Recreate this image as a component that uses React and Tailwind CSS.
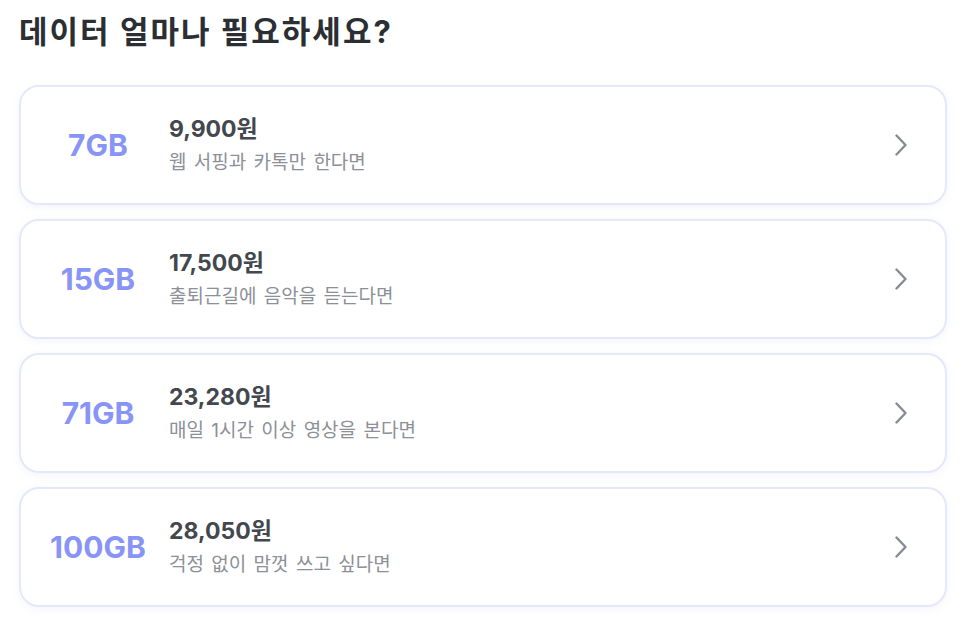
const plans = [
  { size: "7GB", price: "9,900원", desc: "웹 서핑과 카톡만 한다면" },
  { size: "15GB", price: "17,500원", desc: "출퇴근길에 음악을 듣는다면" },
  { size: "71GB", price: "23,280원", desc: "매일 1시간 이상 영상을 본다면" },
  { size: "100GB", price: "28,050원", desc: "걱정 없이 맘껏 쓰고 싶다면" },
];

function App() {
  return (
    <div
      className="min-h-screen bg-white px-[19px] pt-[11px]"
      style={{ fontFamily: 'Inter, "Noto Sans CJK KR", sans-serif' }}
    >
      <h1 className="text-[31px] font-bold leading-[42px] text-[#2b2e33] tracking-[2px]">
        데이터 얼마나 필요하세요?
      </h1>

      <div className="mt-[32px] flex flex-col gap-[14px] w-[928px]">
        {plans.map((plan) => (
          <button
            key={plan.size}
            className="flex items-center h-[120px] bg-white border-2 border-[#e5e8fb] rounded-[20px] shadow-[0_2px_8px_rgba(120,130,200,0.08)] text-left"
          >
            {/* size */}
            <div className="w-[148px] pl-[6px] shrink-0 text-center text-[30px] font-bold text-[#8894f6]">
              {plan.size}
            </div>

            {/* price + desc */}
            <div className="flex-1 flex flex-col">
              <span className="text-[23px] font-bold leading-[28px] text-[#43474e]">
                {plan.price}
              </span>
              <span className="mt-[8px] text-[19px] leading-[24px] text-[#8c9097] [word-spacing:2px]">
                {plan.desc}
              </span>
            </div>

            <svg width="12" height="22" viewBox="0 0 12 22" fill="none" className="mr-[38px] shrink-0">
              <path d="M1.5 1.5 L10.5 11 L1.5 20.5" stroke="#878b92" strokeWidth="2.4" strokeLinecap="round" strokeLinejoin="round" />
            </svg>
          </button>
        ))}
      </div>
    </div>
  );
}

export default App;
